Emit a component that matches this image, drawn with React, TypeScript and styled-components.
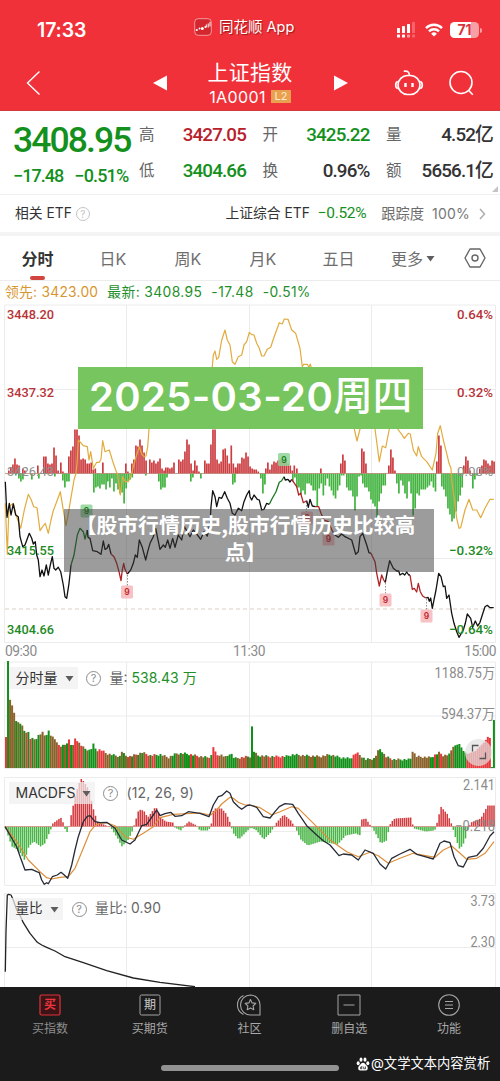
import React from 'react';
import styled, { createGlobalStyle } from 'styled-components';

const DIN = 'Roboto, "Noto Sans CJK SC", sans-serif';
const UI = 'Inter, "Noto Sans CJK SC", sans-serif';

const GlobalStyle = createGlobalStyle`
  * { box-sizing: border-box; }
  body { margin: 0; background: #fff; font-family: ${UI}; color: #333; }
`;

/* ---------- shared ---------- */
const Phone = styled.div`
  position: relative;
  width: 500px;
  height: 1081px;
  display: flex;
  flex-direction: column;
  overflow: hidden;
  background: #fff;
  white-space: nowrap;
`;

const Text = styled.span<{ $size: number; $color?: string; $weight?: number; $ls?: number; $din?: boolean }>`
  font-family: ${p => (p.$din ? DIN : UI)};
  font-size: ${p => p.$size}px;
  line-height: 1;
  color: ${p => p.$color ?? '#333'};
  font-weight: ${p => p.$weight ?? 400};
  letter-spacing: ${p => p.$ls ?? 0}px;
`;

/* ---------- header ---------- */
const Header = styled.header`
  height: 111px;
  flex: none;
  background: #f03139;
  border-bottom: 1px solid #cf3a40;
  display: flex;
  flex-direction: column;
`;

const StatusBar = styled.div`
  height: 56px;
  padding: 5px 21px 0 37px;
  display: grid;
  grid-template-columns: 157px 1fr auto;
  align-items: center;
`;

const AppTag = styled.div`
  display: flex;
  align-items: center;
  gap: 7px;
  height: 20px;
  margin-top: -6px;
  text-shadow: 1px 1px 1px rgba(90, 0, 0, 0.55);
`;

const StatusIcons = styled.div`
  display: flex;
  align-items: center;
  gap: 7px;
`;

const Battery = styled.div`
  position: relative;
  width: 29px;
  height: 16px;
  border-radius: 4.5px;
  background: linear-gradient(90deg, #fff 0 71%, #f8a0a4 71%);
  display: flex;
  align-items: center;
  justify-content: center;
  &::after {
    content: "";
    position: absolute;
    right: -3px;
    top: 5.5px;
    width: 2px;
    height: 5px;
    border-radius: 0 2px 2px 0;
    background: #f8a0a4;
  }
`;

const NavBar = styled.div`
  height: 55px;
  padding: 0 26px 0 26px;
  display: grid;
  grid-template-columns: 127px 41px 1fr 60px 54px 26px;
  align-items: center;
`;

const TitleBlock = styled.div`
  display: flex;
  flex-direction: column;
  align-items: center;
  gap: 6px;
  padding-top: 1px;
  width: 112px;
`;

const CodeRow = styled.div`
  display: flex;
  align-items: center;
  gap: 5px;
`;

const Level = styled.span`
  width: 20px;
  height: 13px;
  background: #e9a04f;
  color: #fbe9d2;
  font: 400 11px/13px ${UI};
  text-align: center;
`;

/* ---------- quote ---------- */
const Quote = styled.section`
  height: 84px;
  flex: none;
  padding: 0 7px 0 13px;
  display: flex;
  border-bottom: 1px solid #f0f0f0;
  position: relative;
`;

const PriceBlock = styled.div`
  width: 126px;
  display: flex;
  flex-direction: column;
  padding-top: 12px;
  gap: 8px;
`;

const ChangeRow = styled.div`
  display: flex;
  gap: 11px;
`;

const Stats = styled.div`
  flex: 1;
  display: grid;
  grid-template-columns: repeat(3, 107px);
  grid-template-rows: 36px 36px;
  column-gap: 16.5px;
  padding-top: 6px;
`;

const Stat = styled.div`
  display: flex;
  justify-content: space-between;
  align-items: center;
`;

const Corner = styled.svg`
  position: absolute;
  right: 2px;
  bottom: 2px;
`;

const EtfRow = styled.div`
  height: 41px;
  flex: none;
  padding: 1px 14px 0 15px;
  display: flex;
  align-items: center;
  border-bottom: 4px solid #f4f4f5;
`;

const Spacer = styled.div`
  flex: 1;
`;

const HelpMark = styled.span<{ $d: number; $c: string }>`
  width: ${p => p.$d}px;
  height: ${p => p.$d}px;
  flex: none;
  border: 1px solid ${p => p.$c};
  border-radius: 50%;
  color: ${p => p.$c};
  font: 400 ${p => p.$d - 4}px/${p => p.$d - 2}px ${UI};
  text-align: center;
`;

const EtfChange = styled(Text)`
  margin: 0 15px 0 8px;
`;

const EtfTrack = styled(Text)`
  margin: 0 9px 0 8px;
`;

const EtfLabel = styled(Text)`
  margin-right: 4px;
`;

/* ---------- tabs ---------- */
const Tabs = styled.nav`
  height: 45px;
  flex: none;
  display: grid;
  grid-template-columns: 75px 76px 74px 76px 75px 74px 50px;
  align-items: stretch;
  border-bottom: 1px solid #ececec;
`;

const Tab = styled.div<{ $active?: boolean }>`
  display: flex;
  align-items: center;
  justify-content: center;
  gap: 3px;
  position: relative;
  font-size: 16px;
  color: ${p => (p.$active ? '#333' : '#6e6e6e')};
  font-weight: ${p => (p.$active ? 700 : 400)};
  &::after {
    content: ${p => (p.$active ? '""' : 'none')};
    position: absolute;
    bottom: 0;
    left: 30px;
    width: 15px;
    height: 4px;
    border-radius: 2px;
    background: #d2453f;
  }
`;

const Legend = styled.div`
  height: 23px;
  flex: none;
  padding: 1px 0 0 5px;
  display: flex;
  align-items: center;
  gap: 9px;
`;

/* ---------- charts ---------- */
const Panel = styled.section<{ $h: number }>`
  position: relative;
  height: ${p => p.$h}px;
  flex: none;
`;

const Chart = styled.svg`
  display: block;
`;

const TimeAxis = styled.div`
  height: 18px;
  flex: none;
  padding: 0 4px 0 5px;
  display: grid;
  grid-template-columns: 1fr auto 1fr;
  align-items: center;
  & > :nth-child(2) { margin-right: 3px; }
  & > :last-child { text-align: right; }
`;

const PanelTools = styled.div<{ $top: number; $chip: number }>`
  position: absolute;
  left: 9px;
  top: ${p => p.$top}px;
  height: 22px;
  display: grid;
  grid-template-columns: ${p => p.$chip}px 15px auto auto;
  align-items: center;
  column-gap: 8.5px;
`;

const Chip = styled.div`
  height: 22px;
  padding: 0 4px 0 6.5px;
  background: rgba(240, 240, 240, 0.72);
  display: flex;
  align-items: center;
  justify-content: space-between;
`;

const DateBanner = styled.div`
  position: absolute;
  left: 78px;
  top: 367px;
  width: 345px;
  height: 62px;
  padding-bottom: 3px;
  background: #77c55f;
  color: #fff;
  display: flex;
  align-items: center;
  justify-content: center;
  font: 600 40px/1 ${UI};
  letter-spacing: 0.35px;
`;

const Weekday = styled.span`
  font-weight: 500;
  font-size: 39.5px;
  letter-spacing: 0;
`;

const Caption = styled.div`
  position: absolute;
  left: 64px;
  top: 509px;
  width: 370px;
  height: 63px;
  padding: 2px 7px 0 0;
  background: rgba(58, 58, 58, 0.5);
  color: #fff;
  text-align: center;
  font: 700 20.8px/27px "Noto Sans CJK SC", sans-serif;
`;

const Expand = styled.div`
  position: absolute;
  left: 465px;
  top: 78px;
  width: 27px;
  height: 27px;
  border-radius: 50%;
  background: rgba(225, 225, 225, 0.7);
`;

/* ---------- footer ---------- */
const Footer = styled.footer`
  height: 94px;
  flex: none;
  background: #1b1b1b;
  display: flex;
  flex-direction: column;
  justify-content: space-between;
  align-items: center;
  padding-bottom: 10px;
`;

const FooterNav = styled.div`
  width: 500px;
  display: grid;
  grid-template-columns: repeat(5, 99.8px);
  padding-top: 7px;
`;

const NavItem = styled.div`
  display: flex;
  flex-direction: column;
  align-items: center;
  gap: 7px;
`;

const HomeBar = styled.div`
  width: 178px;
  height: 6px;
  border-radius: 3px;
  background: #929292;
`;

const Watermark = styled.div`
  position: absolute;
  left: 356px;
  top: 1055px;
  display: flex;
  align-items: center;
  gap: 1px;
  height: 17px;
`;

/* ---------- data: pairs in thirds of a pixel, split at mid-session ---------- */
type Pt = [number, number];
const plot = (s: string, ox: number, oy: number): Pt[] =>
  s.trim().split(/\s+/).map(p => {
    const [x, y] = p.split(',').map(Number);
    return [ox + x / 3, oy + y / 3] as Pt;
  });
const str = (pts: Pt[]) => pts.map(p => `${p[0].toFixed(1)},${p[1].toFixed(1)}`).join(' ');

const gold = str([
  ...plot('16,130 22,283 27,140 40,130 48,165 62,205 73,150 85,103 93,118 101,140 111,143 120,212 128,200 136,190 145,220 153,180 160,152 170,125 181,95 188,140 198,197 206,155 210,130 216,95 222,60 228,40 232,0', 0, 460),
  ...plot('235,420 250,437 262,440 267,480 272,455 280,505 290,487 298,487 303,478 308,422 315,455 328,450 340,490 348,512 353,525 361,585 368,530 376,545 385,545 395,520 405,480 418,440 425,462 432,470 438,468 443,440 447,387 470,330 500,345 540,300 580,330 620,310 632,250 637,200 640,165 645,153 650,178 656,172 665,120 675,90 682,120 690,135 697,185 705,193 715,170 725,165 732,135 740,125 748,97', 0, 300),
  ...plot('4,103 12,105 20,130 28,145 35,168 42,168 52,148 62,142 70,118 78,95 88,68 97,72 103,57 114,58 125,90 137,100 150,145 157,200 161,193 172,193 177,202 181,192 187,215 220,260 260,300 300,345 313,387 321,423 330,387 350,330 375,387 388,485 397,438 407,443 418,387 430,360 443,387 455,403 463,415 475,400 481,402 490,450 500,468 505,440 515,470 530,485 547,510 558,460 563,400 571,377 580,420 590,460 597,490 603,505', 250, 300),
  ...plot('605,60 612,110 620,175 627,205 632,203 645,150 657,118 668,150 680,150 692,173 705,145 713,130 720,118 731,118', 250, 460),
]);

const priceSegments: { c: string; pts: Pt[] }[] = [
  { c: '#111', pts: plot('16,65 21,172 28,130 33,165 40,132 47,165 55,170 60,230 68,260 75,255 88,220 95,235 100,252 106,245 110,285 115,300 120,350 126,330 132,348 139,315 145,345 151,315 157,290 162,325 167,330 175,322 182,335 190,375 195,410 200,415 207,370 213,315', 0, 460) },
  { c: '#187a20', pts: plot('213,315 222,285 232,225 240,205 250,215 255,237 262,210', 0, 460) },
  { c: '#111', pts: plot('262,210 264,232 270,235 278,272 292,275 303,283 310,243 315,268 321,265 326,253 333,282', 0, 460) },
  { c: '#b22225', pts: plot('333,282 342,290 350,310 357,335 363,362 367,330 371,310 375,328 382,342', 0, 460) },
  { c: '#111', pts: plot('382,342 392,330 400,310 406,285 412,292 418,240 427,262 437,300 443,275 450,250 460,230 467,205 473,235 480,268 490,255 496,262 503,240 510,265 518,235 525,262 535,225 545,240 553,200 560,212 570,230 580,210 590,222 602,238 612,215 622,228 630,190 633,140 638,92 645,110 650,140 657,112 665,115 674,95 682,115 690,130 697,160 705,165 715,145 725,152 732,125 740,105 748,92', 0, 460).concat(plot('0,110 5,120 12,105 22,118 28,120 35,150 42,148 50,130 58,133', 250, 460)) },
  { c: '#187a20', pts: plot('58,133 67,115 78,95 88,67 95,62 102,50', 250, 460) },
  { c: '#111', pts: plot('102,50 106,60 114,58 120,66 125,58', 250, 460) },
  { c: '#b22225', pts: plot('125,58 140,80 146,105 152,100 160,128 170,122', 250, 460) },
  { c: '#111', pts: plot('170,122 175,142 180,118 187,138 195,140', 250, 460) },
  { c: '#b22225', pts: plot('195,140 206,140 213,160 222,180 235,185 248,215', 250, 460) },
  { c: '#111', pts: plot('248,215 255,225 265,232 275,222 285,230 305,240 317,283 325,275 330,230 338,220 350,255 357,278 363,280', 250, 460) },
  { c: '#b22225', pts: plot('363,280 375,305 380,340 388,378 395,345 401,360 406,367', 250, 460) },
  { c: '#111', pts: plot('406,367 412,335 419,302 430,325 440,333 446,333 450,345 458,340 464,345 470,336 476,345 480,345', 250, 460) },
  { c: '#b22225', pts: plot('480,345 487,388 493,385 500,396 505,370 511,395 518,408 527,414', 250, 460) },
  { c: '#111', pts: plot('527,414 534,412 538,424 542,414 547,445 553,415 558,390 566,340 573,350 580,380 585,378 590,415 597,405 605,460 612,490 620,515 627,532 640,510 646,490 652,462 662,475 668,502 676,483 683,498 690,487 697,465 705,440 712,436 720,443 731,443', 250, 460) },
];

type Run = [number, number[]];
const upRuns: Run[] = [
  [8, [3, 6, 9, 15, 9, 8]], [22, [5, 3]], [37, [8]], [43, [17, 17, 10, 9, 10, 26, 18, 3]], [60, [11, 2]],
  [68, [17, 23, 27, 44, 44, 38, 14, 15, 14, 10, 10, 11, 4, 5]], [102, [11]], [125, [10, 2]],
  [131, [10, 14, 28, 27, 34, 28, 21, 13]], [149, [14, 11, 13, 10, 12, 15, 5, 3]], [165, [6, 6, 5, 6, 11]],
  [178, [14, 12, 14, 22, 34, 29, 10, 3]], [194, [13, 8, 2]],
  [204, [13, 10, 10, 29, 44, 44, 14, 10, 12, 24, 25, 18, 10, 28, 10, 6, 3]],
  [235, [6, 10, 10, 16, 15, 21, 17, 7, 5, 4, 4, 2]],
  [265, [5, 11, 4, 9, 12, 11, 13, 14, 14, 11, 14, 10, 8, 3, 8]], [296, [5]], [320, [5]], [340, [10, 19, 13]],
  [361, [25, 22, 10]], [388, [8, 24, 16, 3]], [436, [12, 38, 28]], [463, [8, 17, 13, 3]],
  [479, [5, 8, 14, 13, 10, 8, 13, 12]],
];
const downRuns: Run[] = [
  [15, [2]], [18, [5, 8, 6]], [31, [6]], [38, [5]], [54, [3]], [62, [7, 14, 8, 8]],
  [93, [19, 14, 13, 15, 11, 11, 16]], [107, [8, 14, 5, 18, 10, 16, 20, 19, 30, 15, 8, 6, 4]],
  [145, [2]], [158, [8, 16, 14, 14, 4]], [190, [8, 4]], [200, [5]], [232, [11, 9]],
  [260, [5, 20, 11]], [292, [8, 4, 14, 14, 21, 17, 21, 10, 10, 12, 17, 17, 33, 15, 10, 22, 12, 5, 13, 17, 22, 25, 17, 12, 2, 2]],
  [346, [14, 17, 17, 23, 37, 23, 3, 2]], [362, [10, 14, 14, 18, 26, 30, 33, 45, 28, 20, 12, 12]],
  [396, [10, 20, 7, 12, 20, 25, 8, 20, 42, 35, 20, 22, 16, 16, 16, 14, 12, 8, 14, 18]],
  [441, [13, 16, 23, 35, 41, 48, 45, 38, 28, 22, 14]], [472, [15, 6, 2]],
];

const interpolate = (pts: Pt[], x: number) => {
  const i = pts.findIndex(p => p[0] >= x);
  if (i <= 0) return i === 0 ? pts[0][1] : pts[pts.length - 1][1];
  const [a, b] = [pts[i - 1], pts[i]];
  return a[1] + ((b[1] - a[1]) * (x - a[0])) / (b[0] - a[0]);
};

const volProfile: Pt[] = [[5, 31], [6, 31], [6.2, 107], [8, 107], [8.5, 71], [11, 65], [13, 58], [15, 49], [17, 45], [21, 44], [23, 37], [28, 35], [30, 29], [35, 28], [38, 32], [42, 35], [45, 31], [48, 37], [51, 31], [56, 27], [59, 21], [64, 22], [69, 28], [72, 19], [75, 30], [79, 24], [84, 19], [90, 17], [93, 23], [96, 17], [100, 18], [106, 14], [115, 12], [120, 11], [122, 18], [124, 12], [130, 11], [142, 15], [150, 12], [160, 13], [168, 10], [176, 14], [185, 14], [200, 11], [208, 10], [211, 12], [213, 21], [216, 12], [220, 13], [226, 10], [230, 15], [234, 9], [248, 11], [250.5, 11], [251, 41], [252.5, 40], [253, 17], [257, 12], [270, 11], [285, 11], [293, 13], [303, 12], [320, 11], [330, 13], [333, 12], [340, 10], [350, 9], [356, 15], [360, 12], [365, 8], [374, 9], [379, 19], [382, 16], [385, 11], [393, 8], [410, 8], [412, 17], [416, 11], [430, 10], [439, 15], [443, 12], [449, 13], [453, 22], [459, 24], [463, 17], [467, 14], [475, 17], [480, 22], [484, 26], [488, 32], [489.5, 30], [490, 1], [493, 1], [493.5, 48]];
const G = '#109018';
const R = '#e8383b';
const B = '#8a622b';
const volRuns: [number, string][] = [[7, R], [9, G], [15, B], [24, G], [30, R], [32, G], [35, B], [39, G], [46, B], [50, G], [56, B], [61, R], [66, G], [71, R], [74, R], [82, R], [86, G], [90, B], [95, G], [98, B], [104, R], [110, B], [128, G], [137, R], [145, G], [155, R], [161, G], [172, B], [186, G], [189, B], [197, R], [208, B], [218, R], [226, B], [236, G], [248, R], [253, G], [256, R], [262, G], [283, R], [297, G], [306, B], [312, G], [325, B], [344, G], [352, G], [362, R], [382, G], [390, R], [399, B], [412, G], [430, B], [441, R], [453, B], [461, G], [466, G], [490, R], [500, G]];
const volBars = Array.from({ length: 241 }, (_, i) => {
  const x = 5 + i * 2.033;
  const base = volRuns.find(r => x + 0.5 < r[0])?.[1] ?? G;
  const steady = x < 12 || x > 453;
  const mix = (i * 7 + ((i * i) % 5)) % 6;
  const color = !steady && mix === 0 ? (base === G ? B : G) : !steady && mix === 1 ? B : base;
  const jitter = steady ? 0 : ((i * 13) % 5) * 0.5 - 0.5;
  return { x, h: Math.max(1, interpolate(volProfile, x + 0.6) + jitter), color };
});

const macdProfile: Pt[] = [[5, -2], [11, -20], [15, -22], [20, -27], [24, -34], [28, -20], [33, -15], [40, -20], [44, -17], [50, -3], [52, 3], [60, 9], [62, 5], [64, -2], [66, -6], [68, -3], [69, 5], [75, 33], [80, 48], [83, 45], [88, 37], [93, 16], [97, 4], [103, 2], [110, -1], [117, -12], [121, -20], [127, -14], [131, -6], [134, 3], [138, 17], [143, 16], [147, 9], [155, 20], [160, 9], [165, 5], [172, 4], [174, -1], [180, -4], [184, 1], [188, 5], [196, 1], [199, -4], [208, -4], [211, 4], [213, 18], [221, 18], [226, 12], [230, 2], [232, -6], [238, -13], [243, -8], [250, -1], [256, -4], [263, -13], [270, -6], [275, 3], [283, 12], [290, 6], [295, -2], [300, -13], [307, -19], [320, -15], [337, -18], [345, -9], [355, -7], [359, -9], [361, 7], [365, 8], [369, 2], [372, -2], [376, -9], [380, -17], [386, -14], [388, -3], [390, 4], [394, 8], [410, 9], [413, -2], [425, -5], [434, -4], [437, 6], [440, 20], [447, 12], [451, 2], [455, -12], [459, -23], [464, -15], [467, -3], [470, 4], [480, 8], [487, 21], [494, 21]];
const macdBars = Array.from({ length: 241 }, (_, i) => {
  const x = 5.3 + i * 2.033;
  return { x, h: interpolate(macdProfile, x) };
});
const dif = str([
  ...plot('15,515 30,540 50,575 62,610 75,645 95,643 110,650 118,653 125,675 133,688 140,683 145,686 157,665 172,660 183,652 193,660 203,670 215,630 225,585 235,545 250,500 262,484 270,482 285,500 300,503 320,502 345,520 365,555 390,567 405,555 425,512 440,508 460,480 470,465 480,482 495,476 512,472 525,484 545,482 565,470 600,475 627,485 640,450 655,425 665,422 680,408 690,415 700,440 715,455 725,463 740,452', 0, 655),
  ...plot('0,450 20,457 40,485 60,489 75,470 88,455 105,446 128,448 145,475 170,512 200,540 220,557 240,570 267,602 280,597 305,600 325,615 345,585 370,595 390,627 407,642 425,610 450,597 480,583 500,598 525,605 550,612 570,565 582,558 600,563 612,605 625,632 640,636 655,607 680,602 700,580 720,543 732,530', 250, 655),
]);
const dea = str([
  ...plot('15,515 50,560 85,615 120,650 140,668 155,672 180,667 205,665 225,640 250,580 270,530 285,512 300,505 320,503 345,512 375,545 400,553 430,535 460,515 480,488 520,478 600,474 632,480 650,465 665,447 690,427 700,430 715,442 735,450', 0, 655),
  ...plot('0,450 30,458 65,480 90,470 125,455 145,460 200,515 240,555 290,590 325,605 360,592 385,602 415,625 450,610 490,595 555,607 580,585 605,573 625,590 650,613 680,610 705,595 732,560', 250, 655),
]);
const ratio = str(plot('16,260 18,140 22,30 26,28 33,30 40,45 50,75 62,95 70,113 90,145 112,172 125,180 140,187 165,198 195,215 250,233 320,257 400,279 480,292 585,305', 0, 885));

/* ---------- drawing parts ---------- */
const Lbl = ({ x, y, w, s = 13.6, c, end, weight = 500, children }: { x: number; y: number; w: number; s?: number; c: string; end?: boolean; weight?: number; children: string }) => (
  <text x={end ? x - w : x} y={y} textLength={w} lengthAdjust="spacingAndGlyphs" fontFamily={DIN} fontSize={s} fontWeight={weight} fill={c}>
    {children}
  </text>
);

const Grid = ({ top, bottom, rows }: { top: number; bottom: number; rows: number[] }) => (
  <g stroke="#ececec" strokeWidth="1">
    {[4.5, 126.5, 249.5, 371.5, 495.5].map(x => (
      <line key={x} x1={x} x2={x} y1={top} y2={bottom} />
    ))}
    {rows.map(y => (
      <line key={y} x1="4.5" x2="495.5" y1={y} y2={y} />
    ))}
  </g>
);

const Marker = ({ x, y, up }: { x: number; y: number; up?: boolean }) => (
  <g>
    <rect x={x - 6} y={y - 6.5} width="12" height="13" rx="1.5" fill={up ? '#8fd396' : '#f7b6b9'} fillOpacity="0.85" />
    <text x={x} y={y + 3.2} textAnchor="middle" fontFamily={UI} fontSize="8.5" fontWeight="600" fill={up ? '#187a20' : '#c0272d'}>9</text>
  </g>
);

const Caret = () => (
  <svg width="9" height="7" viewBox="0 0 9 7"><path d="M.5 1h8L4.5 6.500z" fill="#5d5d5d" /></svg>
);

const stats: [string, string, string][] = [
  ['高', '3427.05', '#b8202a'], ['开', '3425.22', '#14901c'], ['量', '4.52亿', '#333'],
  ['低', '3404.66', '#14901c'], ['换', '0.96%', '#333'], ['额', '5656.1亿', '#333'],
];

const Signal = () => (
  <svg width="22" height="16" viewBox="0 0 22 16" fill="#fff">
    <rect x="1" y="6" width="3" height="5" rx=".6" /><rect x="6" y="4" width="3" height="7" rx=".6" /><rect x="11" y="2" width="3" height="9" rx=".6" />
    <rect x="16" y="0" width="3" height="11" rx=".6" opacity=".25" />
    <rect x="1" y="12.5" width="3" height="3" rx=".6" /><rect x="6" y="12.5" width="3" height="3" rx=".6" />
    <rect x="11" y="12.5" width="3" height="3" rx=".6" opacity=".5" /><rect x="16" y="12.5" width="3" height="3" rx=".6" opacity=".25" />
  </svg>
);

export default function App() {
  return (
    <Phone>
      <GlobalStyle />
      <Header>
        <StatusBar>
          <Text $size={19.5} $color="#fff" $weight={600} $ls={-0.1}>17:33</Text>
          <AppTag>
            <svg width="18" height="18" viewBox="0 0 18 18" fill="none" stroke="#fff">
              <rect x=".7" y=".7" width="16.6" height="16.6" rx="3.5" fill="#d3262e" strokeOpacity=".65" strokeWidth=".8" />
              <g fill="#fff" stroke="none"><circle cx="2.8" cy="12" r="1.1" /><circle cx="5.5" cy="10.500" r=".9" /><circle cx="8.300" cy="10.500" r="1.500" /><circle cx="11.300" cy="9" r=".9" /></g>
              <path d="M12.300 6.500v3M14.200 5.500v4M16 3.800v4.700" strokeWidth="1" />
            </svg>
            <Text $size={14.5} $color="#fff">同花顺 App</Text>
          </AppTag>
          <StatusIcons>
            <Signal />
            <svg width="18" height="14" viewBox="0 0 18 14" fill="none" stroke="#fff" strokeWidth="2.5">
              <path d="M1 5.1a11.5 11.5 0 0 1 16 0M4 8.3a7.2 7.2 0 0 1 10 0" /><path d="M9 13.6L6.100 10.700a4.200 4.200 0 0 1 5.800 0z" fill="#fff" stroke="none" />
            </svg>
            <Battery><Text $size={14} $color="#d9343c" $weight={700}>71</Text></Battery>
          </StatusIcons>
        </StatusBar>
        <NavBar>
          <svg width="15" height="26" viewBox="0 0 15 26" fill="none" stroke="#fff" strokeWidth="1.4"><path d="M13.5 1.5L1.5 13l12 11.5" /></svg>
          <svg width="14" height="16" viewBox="0 0 14 16"><path d="M14 .5v15L0 8z" fill="#fff" /></svg>
          <TitleBlock>
            <Text $size={21} $color="#fff" $ls={0.2}>上证指数</Text>
            <CodeRow>
              <Text $size={16} $color="#fff" $ls={0.4}>1A0001</Text>
              <Level>L2</Level>
            </CodeRow>
          </TitleBlock>
          <svg width="14" height="16" viewBox="0 0 14 16"><path d="M0 .5v15L14 8z" fill="#fff" /></svg>
          <svg width="30" height="28" viewBox="0 0 30 28" fill="none" stroke="#fff" strokeWidth="1.7">
            <path d="M10.500 2.200c2.600-.6 4.500.6 4.800 3.300" strokeLinecap="round" />
            <rect x="4" y="6.500" width="22" height="19" rx="9.500" />
            <path d="M3.800 12.500c-2.800 1-2.800 6 0 7M26.200 12.500c2.800 1 2.800 6 0 7" />
            <path d="M11.500 14v4M18.500 14v4" strokeWidth="2.400" />
          </svg>
          <svg width="26" height="26" viewBox="0 0 26 26" fill="none" stroke="#fff" strokeWidth="1.6"><circle cx="13" cy="12.5" r="11" /><path d="M20.800 20.500l4 4.300" /></svg>
        </NavBar>
      </Header>

      <Quote>
        <PriceBlock>
          <Text $din $size={35.5} $color="#14901c" $weight={500} $ls={-1.9}>3408.95</Text>
          <ChangeRow>
            <Text $din $size={18} $color="#14901c" $weight={500} $ls={-0.95}>−17.48</Text>
            <Text $din $size={18} $color="#14901c" $weight={500} $ls={-0.85}>−0.51%</Text>
          </ChangeRow>
        </PriceBlock>
        <Stats>
          {stats.map(([k, v, c]) => (
            <Stat key={k}>
              <Text $size={15.5} $color="#666">{k}</Text>
              <Text $din $size={18.8} $color={c} $weight={500} $ls={-0.85}>{v}</Text>
            </Stat>
          ))}
        </Stats>
        <Corner width="6" height="6" viewBox="0 0 6 6"><path d="M6 0v6H0z" fill="#c4c4c4" /></Corner>
      </Quote>

      <EtfRow>
        <EtfLabel $size={13.8}>相关 ETF</EtfLabel>
        <HelpMark $d={14} $c="#c4c4c4">?</HelpMark>
        <Spacer />
        <Text $size={13.8}>上证综合 ETF</Text>
        <EtfChange $din $size={15.5} $color="#14901c" $ls={-0.35}>−0.52%</EtfChange>
        <Text $size={14.3} $color="#6c6c6c">跟踪度</Text>
        <EtfTrack $size={14} $color="#777" $ls={0.2}>100%</EtfTrack>
        <svg width="7" height="12" viewBox="0 0 7 12" fill="none" stroke="#aaa" strokeWidth="1.4"><path d="M1 1l4.500 5L1 11" /></svg>
      </EtfRow>

      <Tabs>
        <Tab $active>分时</Tab>
        <Tab>日K</Tab>
        <Tab>周K</Tab>
        <Tab>月K</Tab>
        <Tab>五日</Tab>
        <Tab>更多<Caret /></Tab>
        <Tab>
          <svg width="22" height="20" viewBox="0 0 22 20" fill="none" stroke="#666" strokeWidth="1.400"><path d="M6 1h10l5 9-5 9H6l-5-9z" strokeLinejoin="round" /><circle cx="11" cy="10" r="3" /></svg>
        </Tab>
      </Tabs>

      <Legend>
        <Text $size={13.8} $color="#d8962f" $ls={0.25}>领先: 3423.00</Text>
        <Text $size={13.8} $color="#218f28" $ls={0.4}>最新: 3408.95</Text>
        <Text $size={13.8} $color="#218f28" $ls={0.5}>-17.48</Text>
        <Text $size={13.8} $color="#218f28" $ls={0.3}>-0.51%</Text>
      </Legend>

      <Panel $h={339}>
        <Chart width="500" height="339" viewBox="0 304 500 339">
          <Grid top={305} bottom={642.5} rows={[305, 389.5, 473.5, 558.5, 642.5]} />
          <line x1="5" x2="495" y1="609" y2="609" stroke="#d9cfc6" strokeDasharray="4 3" />
          <g fill="#cc3d41">
            {upRuns.flatMap(([x, hs]) => hs.map((h, i) => <rect key={`${x}-${i}`} x={x + i * 2.033} y={473.5 - h} width="1.700" height={h} />))}
          </g>
          <g fill="#43b340">
            {downRuns.flatMap(([x, hs]) => hs.map((h, i) => <rect key={`${x}-${i}`} x={x + i * 2.033} y="473.5" width="1.700" height={h} />))}
          </g>
          <line x1="5" x2="495" y1="473.5" y2="473.5" stroke="#b9806c" strokeWidth=".7" />
          <g stroke="#777" strokeWidth=".8" strokeDasharray="1.5 1.5">
            <path d="M127.5 575v11M385.5 583v11M426.5 599v11M306.5 502v10" />
          </g>
          <Marker x={86.5} y={511} up />
          <Marker x={284} y={459.5} up />
          <Marker x={127} y={592} />
          <Marker x={307} y={518} />
          <Marker x={328.5} y={539} />
          <Marker x={385.5} y={600} />
          <Marker x={426.5} y={616} />
          <polyline points={gold} fill="none" stroke="#e2ab3d" strokeWidth="1.2" strokeLinejoin="round" />
          <g fill="none" strokeWidth="1.3" strokeLinejoin="round">
            {priceSegments.map((s, i) => <polyline key={i} points={str(s.pts)} stroke={s.c} />)}
          </g>
          <Lbl x={7} y={318.5} w={47} c="#b83338">3448.20</Lbl>
          <Lbl x={7} y={397.3} w={47} c="#b83338">3437.32</Lbl>
          <Lbl x={7} y={476} w={47} c="#8f8f8f" weight={400}>3426.43</Lbl>
          <Lbl x={7} y={554.7} w={47} c="#1d8a25">3415.55</Lbl>
          <Lbl x={7} y={633.7} w={47} c="#1d8a25">3404.66</Lbl>
          <Lbl end x={493} y={318.5} w={36} c="#b83338">0.64%</Lbl>
          <Lbl end x={493} y={397.3} w={36} c="#b83338">0.32%</Lbl>
          <Lbl end x={493} y={476} w={36} c="#8f8f8f" weight={400}>0.00%</Lbl>
          <Lbl end x={493} y={554.7} w={44} c="#1d8a25">−0.32%</Lbl>
          <Lbl end x={493} y={633.7} w={44} c="#1d8a25">−0.64%</Lbl>
        </Chart>
      </Panel>
      <TimeAxis>
        <Text $din $size={13.8} $color="#8b8b8b" $ls={-0.5}>09:30</Text>
        <Text $din $size={13.8} $color="#8b8b8b" $ls={-0.5}>11:30</Text>
        <Text $din $size={13.8} $color="#8b8b8b" $ls={-0.5}>15:00</Text>
      </TimeAxis>

      <Panel $h={114}>
        <Chart width="500" height="114" viewBox="0 661 500 114">
          <Grid top={662} bottom={768} rows={[662, 716, 768.5]} />
          {volBars.map((b, i) => <rect key={i} x={b.x} y={768 - b.h} width="2" height={b.h} fill={b.color} />)}
          <Lbl end x={495} y={677.7} w={60.5} s={14.2} c="#8b8b8b" weight={400}>1188.75万</Lbl>
          <Lbl end x={495} y={719} w={54} s={14.2} c="#8b8b8b" weight={400}>594.37万</Lbl>
        </Chart>
        <PanelTools $top={6} $chip={68.5}>
          <Chip><Text $size={14}>分时量</Text><Caret /></Chip>
          <HelpMark $d={15} $c="#8d8d8d">?</HelpMark>
          <Text $size={14} $color="#666">量: <Text $size={14} $color="#218f28">538.43 万</Text></Text>
        </PanelTools>
        <Expand>
          <svg width="27" height="27" viewBox="0 0 27 27" fill="none" stroke="#555" strokeWidth="1.3"><path d="M7.500 12.500v-6h6M20.500 13.500v6h-6" /></svg>
        </Expand>
      </Panel>

      <Panel $h={117}>
        <Chart width="500" height="117" viewBox="0 775 500 117">
          <Grid top={777.5} bottom={885} rows={[777.5, 831.5, 885.5]} />
          {macdBars.map((b, i) => <rect key={i} x={b.x} y={b.h > 0 ? 826.5 - b.h : 826.5} width="1.55" height={Math.abs(b.h)} fill={b.h > 0 ? '#d23c40' : '#49b546'} />)}
          <line x1="5" x2="495" y1="826.5" y2="826.5" stroke="#d98a84" strokeWidth=".8" />
          <polyline points={dea} fill="none" stroke="#dc8f3b" strokeWidth="1.2" strokeLinejoin="round" />
          <polyline points={dif} fill="none" stroke="#262b36" strokeWidth="1.3" strokeLinejoin="round" />
          <Lbl end x={495} y={790} w={32} s={14.2} c="#8b8b8b" weight={400}>2.141</Lbl>
          <Lbl end x={495} y={831} w={40} s={14.2} c="#8b8b8b" weight={400}>−0.218</Lbl>
        </Chart>
        <PanelTools $top={7} $chip={85.5}>
          <Chip><Text $size={14} $ls={0.1}>MACDFS</Text><Caret /></Chip>
          <HelpMark $d={15} $c="#8d8d8d">?</HelpMark>
          <Text $size={14} $color="#666" $ls={0.15}>(12, 26, 9)</Text>
        </PanelTools>
      </Panel>

      <Panel $h={95}>
        <Chart width="500" height="95" viewBox="0 892 500 95">
          <Grid top={893} bottom={987} rows={[893.5, 947.5]} />
          <Lbl end x={495} y={906} w={24.5} s={14.2} c="#8b8b8b" weight={400}>3.73</Lbl>
          <Lbl end x={495} y={947} w={24.5} s={14.2} c="#8b8b8b" weight={400}>2.30</Lbl>
          <polyline points={ratio} fill="none" stroke="#222" strokeWidth="1.3" strokeLinejoin="round" />
        </Chart>
        <PanelTools $top={6} $chip={54}>
          <Chip><Text $size={13.5}>量比</Text><Caret /></Chip>
          <HelpMark $d={15} $c="#8d8d8d">?</HelpMark>
          <Text $size={13.8} $color="#666" $ls={0.15}>量比: 0.90</Text>
        </PanelTools>
      </Panel>

      <Footer>
        <FooterNav>
          <NavItem>
            <svg width="22" height="22" viewBox="0 0 22 22"><rect x="1" y="1" width="20" height="20" rx="1.5" fill="#3a1416" stroke="#e0323a" strokeWidth="1.2" /><text x="11" y="15.3" textAnchor="middle" fontFamily={UI} fontSize="12" fontWeight="700" fill="#f0353d">买</text></svg>
            <Text $size={12} $color="#8d8d8d">买指数</Text>
          </NavItem>
          <NavItem>
            <svg width="22" height="22" viewBox="0 0 22 22"><rect x="1" y="1" width="20" height="20" rx="1.5" fill="none" stroke="#a5a5a5" /><text x="11" y="15.3" textAnchor="middle" fontFamily={UI} fontSize="12" fontWeight="500" fill="#b5b5b5">期</text></svg>
            <Text $size={12} $color="#a8a8a8">买期货</Text>
          </NavItem>
          <NavItem>
            <svg width="26" height="22" viewBox="0 0 26 22" fill="none" stroke="#a5a5a5" strokeWidth="1.1">
              <path d="M14.5 1a10 10 0 0 0 0 20h9.500V11a9.700 9.700 0 0 0-9.500-10zM7.500 1.500a10.500 10.500 0 0 0 0 19" />
              <path d="M14.500 5.500l1.600 3.400 3.700.5-2.700 2.600.7 3.700-3.300-1.800-3.300 1.800.7-3.700-2.700-2.600 3.700-.5z" strokeLinejoin="round" />
            </svg>
            <Text $size={12} $color="#a8a8a8">社区</Text>
          </NavItem>
          <NavItem>
            <svg width="24" height="22" viewBox="0 0 24 22" fill="none" stroke="#a5a5a5"><path d="M1 1h22v20H1zM6.500 11h11" /></svg>
            <Text $size={12} $color="#a8a8a8">删自选</Text>
          </NavItem>
          <NavItem>
            <svg width="22" height="22" viewBox="0 0 22 22" fill="none" stroke="#a5a5a5" strokeWidth="1.1"><circle cx="11" cy="11" r="10.3" /><path d="M7 7.500h8M7 11h8M7 14.500h8" /></svg>
            <Text $size={12} $color="#a8a8a8">功能</Text>
          </NavItem>
        </FooterNav>
        <HomeBar />
      </Footer>

      <DateBanner>2025-03-20<Weekday>周四</Weekday></DateBanner>
      <Caption>【股市行情历史,股市行情历史比较高<br />点】</Caption>
      <Watermark>
        <svg width="14" height="14" viewBox="0 0 14 14" fill="#fff">
          <ellipse cx="2.2" cy="6.2" rx="1.5" ry="2" /><ellipse cx="5" cy="2.7" rx="1.5" ry="2.1" /><ellipse cx="9" cy="2.7" rx="1.5" ry="2.1" /><ellipse cx="11.8" cy="6.2" rx="1.5" ry="2" />
          <path d="M7 5.800c1.700 0 2.300 1.700 3.800 3 1.400 1.300 1.500 4.600-1 4.800H4.200c-2.500-.2-2.400-3.500-1-4.800C4.700 7.500 5.300 5.800 7 5.800z" />
          <path d="M5.800 9v3M7.700 9.500v2.300h1.800V9.500M5.800 10.200H4.500v1.600h1.300" fill="none" stroke="#1b1b1b" strokeWidth=".7" />
        </svg>
        <Text $size={13.3} $color="#fff">@文学文本内容赏析</Text>
      </Watermark>
    </Phone>
  );
}
